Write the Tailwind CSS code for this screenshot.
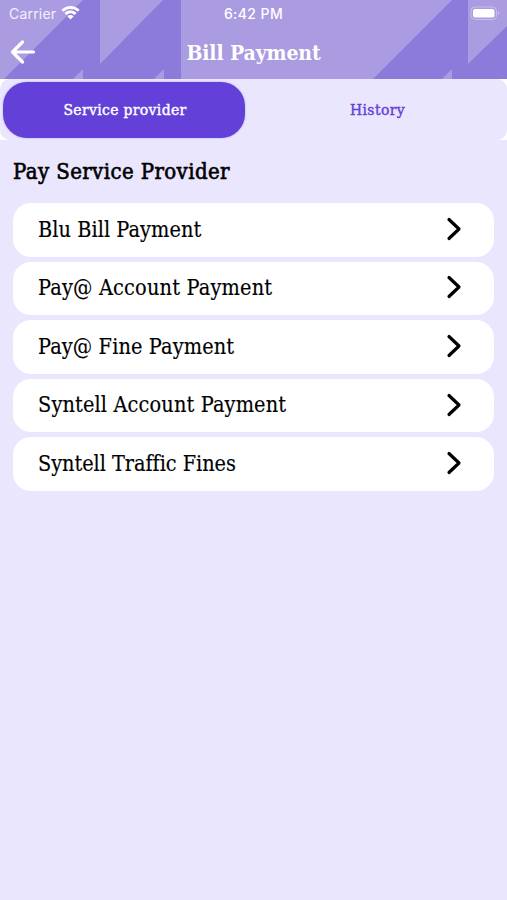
<!DOCTYPE html>
<html lang="en">
<head>
<meta charset="utf-8">
<title>Bill Payment</title>
<script src="https://cdn.jsdelivr.net/npm/@tailwindcss/browser@4"></script>
</head>
<body class="w-[507px] h-[900px] overflow-hidden bg-[#eae6fe] font-['Roboto_Slab','DejaVu_Serif_Condensed','DejaVu_Serif',serif] [font-stretch:90%] text-black">
<header class="relative h-[79px] bg-[#ab9be0] text-white">
  <svg class="absolute inset-0" width="507" height="79" viewBox="0 0 507 79" aria-hidden="true">
    <g fill="#8d7bdb">
      <path d="M4 79L83 0H100V64L163 0H181V79Z"/>
      <path d="M373 79L452 0H468V64L507 26V79Z"/>
    </g>
    <path d="M73 79L83 69V79ZM154 79L164 69V79ZM442 79L452 69V79Z" fill="#ab9be0"/>
  </svg>
  <div class="relative grid grid-cols-3 items-center h-[27px] pl-[9px] pr-[7px] font-['Inter','Roboto',sans-serif] [font-stretch:100%] text-[14px]">
    <div class="flex items-center gap-[5px] text-white/85"><span class="tracking-[0.2px]">Carrier</span>
      <svg class="relative -top-px" width="19" height="15" viewBox="0 0 19 15" fill="none" stroke="#fff" stroke-width="2.7"><path d="M1.3 5.8C6 1.1 13 1.1 17.7 5.8M4.4 9C7.2 6.2 11.8 6.2 14.6 9"/><path d="M6.3 11.2Q9.5 8.6 12.7 11.2L9.5 14.4Z" fill="#fff" stroke="none"/></svg>
    </div>
    <span class="text-center font-medium tracking-[0.4px] pr-[2px]">6:42 PM</span>
    <svg class="justify-self-end" width="30" height="15" viewBox="0 0 30 15"><rect x="1" y="1" width="25.500" height="12.500" rx="4" fill="none" stroke="#fff" stroke-opacity=".35"/><rect x="3" y="3" width="21.500" height="8.500" rx="2" fill="#fff"/><path d="M28 5.200Q30 7.200 28 9.200Z" fill="#fff" fill-opacity=".5"/></svg>
  </div>
  <div class="relative flex items-center h-[50px] pl-[10px]">
    <svg width="26" height="26" viewBox="0 0 26 26" fill="none" stroke="#fff" stroke-width="3.200" stroke-linecap="round" stroke-linejoin="round"><path d="M12.500 3L2.500 13L12.500 23M2.500 13H23.500"/></svg>
    <h1 class="absolute inset-x-0 text-center text-[21px] leading-[51px] font-bold tracking-[-0.1px]">Bill Payment</h1>
  </div>
</header>
<nav class="h-[61px] bg-white">
  <div class="flex h-full rounded-[10px] bg-[#eae6fe] pl-[3px] pt-[2.500px] pb-[3px]">
    <button class="w-[242px] h-[56px] rounded-[24px] bg-[#6341d9] text-white text-[15.500px] font-medium shadow-[0_0_2px_#a99be8] tracking-[0.35px] pt-[2px] pl-[2px] [-webkit-text-stroke:0.4px_currentColor]">Service provider</button>
    <button class="flex-1 text-[#6341d9] text-[15.500px] font-medium pl-[3px] pt-[2px] tracking-[0.4px] [-webkit-text-stroke:0.4px_currentColor]">History</button>
  </div>
</nav>
<main class="px-[13px]">
  <h2 class="h-[63px] pt-[16px] text-[22px] leading-[31px] font-medium tracking-[0.4px] [-webkit-text-stroke:0.600px_currentColor]">Pay Service Provider</h2>
  <ul class="flex flex-col gap-[5px] text-[21.500px] [-webkit-text-stroke:0.150px_currentColor]">
    <li class="flex items-center justify-between h-[53.600px] rounded-[18px] bg-white pl-[25px] pr-[32px]"><span class="tracking-[0.05px]">Blu Bill Payment</span><svg class="relative -top-px" width="16" height="24" viewBox="0 0 16 24" fill="none" stroke="#000" stroke-width="3.200" stroke-linecap="round" stroke-linejoin="round"><path d="M3 2.500L13 12L3 21.500"/></svg></li>
    <li class="flex items-center justify-between h-[53.600px] rounded-[18px] bg-white pl-[25px] pr-[32px]"><span class="tracking-[0.18px]">Pay@ Account Payment</span><svg class="relative -top-px" width="16" height="24" viewBox="0 0 16 24" fill="none" stroke="#000" stroke-width="3.200" stroke-linecap="round" stroke-linejoin="round"><path d="M3 2.500L13 12L3 21.500"/></svg></li>
    <li class="flex items-center justify-between h-[53.600px] rounded-[18px] bg-white pl-[25px] pr-[32px]"><span class="tracking-[0.12px]">Pay@ Fine Payment</span><svg class="relative -top-px" width="16" height="24" viewBox="0 0 16 24" fill="none" stroke="#000" stroke-width="3.200" stroke-linecap="round" stroke-linejoin="round"><path d="M3 2.500L13 12L3 21.500"/></svg></li>
    <li class="flex items-center justify-between h-[53.600px] rounded-[18px] bg-white pl-[25px] pr-[32px]"><span class="tracking-[0.14px]">Syntell Account Payment</span><svg class="relative -top-px" width="16" height="24" viewBox="0 0 16 24" fill="none" stroke="#000" stroke-width="3.200" stroke-linecap="round" stroke-linejoin="round"><path d="M3 2.500L13 12L3 21.500"/></svg></li>
    <li class="flex items-center justify-between h-[53.600px] rounded-[18px] bg-white pl-[25px] pr-[32px]"><span class="tracking-[-0.05px] [font-variant-ligatures:common-ligatures]">Syntell Traffic Fines</span><svg class="relative -top-px" width="16" height="24" viewBox="0 0 16 24" fill="none" stroke="#000" stroke-width="3.200" stroke-linecap="round" stroke-linejoin="round"><path d="M3 2.500L13 12L3 21.500"/></svg></li>
  </ul>
</main>
</body>
</html>
